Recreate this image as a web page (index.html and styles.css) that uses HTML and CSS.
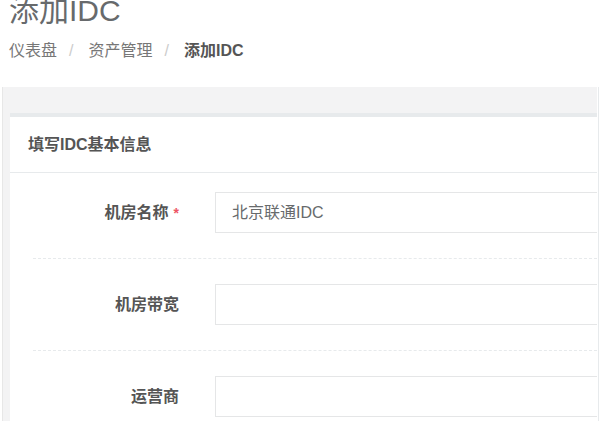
FILE: index.html
```html
<!DOCTYPE html>
<html lang="zh-CN">
<head>
<meta charset="utf-8">
<title>添加IDC</title>
<link rel="stylesheet" href="styles.css">
</head>
<body>
<div class="page-heading">
  <h1 class="page-title">添加IDC</h1>
  <ol class="breadcrumb">
    <li class="crumb">仪表盘</li>
    <li class="sep">/</li>
    <li class="crumb">资产管理</li>
    <li class="sep">/</li>
    <li class="crumb active">添加IDC</li>
  </ol>
</div>
<div class="wrapper">
  <div class="ibox">
    <div class="ibox-title">填写IDC基本信息</div>
    <div class="ibox-content">
      <div class="form-row">
        <label class="form-label">机房名称<span class="req">*</span></label>
        <div class="form-input">北京联通IDC</div>
      </div>
      <div class="hr-dashed"></div>
      <div class="form-row">
        <label class="form-label">机房带宽</label>
        <div class="form-input"></div>
      </div>
      <div class="hr-dashed"></div>
      <div class="form-row">
        <label class="form-label">运营商</label>
        <div class="form-input"></div>
      </div>
      <div class="hr-dashed"></div>
    </div>
  </div>
</div>
</body>
</html>
```

FILE: styles.css
```css
html, body {
  margin: 0;
  padding: 0;
  background: #ffffff;
  overflow: hidden;
  height: 421px;
}
body {
  font-family: "Liberation Sans", "Noto Sans CJK SC", sans-serif;
  font-size: 16px;
  color: #676a6c;
}
.page-heading {
  padding: 0 0 0 9px;
  height: 87px;
}
.page-title {
  margin: 0;
  font-size: 30px;
  font-weight: normal;
  line-height: 22px;
  color: #676a6c;
}
.breadcrumb {
  list-style: none;
  margin: 19px 0 0 0;
  padding: 0;
  display: flex;
  line-height: 20px;
  font-size: 16px;
}
.crumb {
  color: #777;
}
.crumb.active {
  color: #555;
  font-weight: bold;
}
.sep {
  color: #ccc;
  padding: 0 15px 0 12px;
}
.wrapper {
  margin: 0 2px 0 2px;
  border-left: 1px solid #e7e7e7;
  border-right: 1px solid #ffffff;
  box-shadow: 1px 0 0 #e7eaec;
  background: #f3f3f4;
  padding: 26px 0 0 7px;
  height: 400px;
  overflow: hidden;
}
.ibox {
  background: #ffffff;
  border-top: 4px solid #e7eaec;
}
.ibox-title {
  padding: 18px 17px 17px 18px;
  line-height: 20px;
  font-weight: bold;
  color: #555;
  border-bottom: 1px solid #e7eaec;
}
.ibox-content {
  padding: 19px 0 20px 23px;
}
.form-row {
  display: flex;
  align-items: center;
  gap: 36px;
  margin-right: -4px;
}
.form-label {
  width: 146px;
  flex: none;
  text-align: right;
  font-weight: bold;
  color: #555;
  line-height: 20px;
}
.req {
  color: #ed5565;
  font-size: 14px;
  margin-left: 5px;
  vertical-align: top;
}
.form-input {
  flex: 1;
  box-sizing: border-box;
  height: 41px;
  border: 1px solid #e5e6e7;
  padding: 10px 16px;
  line-height: 20px;
  color: #676a6c;
}
.hr-dashed {
  border-top: 1px dashed #e7eaec;
  margin: 25px 0;
}
```
